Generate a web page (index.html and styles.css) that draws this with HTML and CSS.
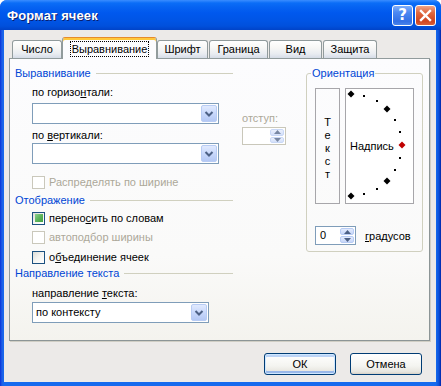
FILE: index.html
```html
<!DOCTYPE html>
<html lang="ru">
<head>
<meta charset="utf-8">
<title>Формат ячеек</title>
<link rel="stylesheet" href="styles.css">
</head>
<body>
<div class="window">
  <div class="titlebar">
    <span class="title">Формат ячеек</span>
    <div class="caption-buttons">
      <span class="cap-btn help">?</span>
      <span class="cap-btn close"><svg width="13" height="13" viewBox="0 0 13 13"><path d="M2 2 L11 11 M11 2 L2 11" stroke="#fff" stroke-width="2.4" stroke-linecap="square"/></svg></span>
    </div>
  </div>
  <div class="client">
    <div class="tabs">
      <span class="tab t-num">Число</span>
      <span class="tab active t-align"><span class="focus">Выравнивание</span></span>
      <span class="tab t-font">Шрифт</span>
      <span class="tab t-border">Граница</span>
      <span class="tab t-view">Вид</span>
      <span class="tab t-prot">Защита</span>
    </div>
    <div class="panel">
      <div class="left">
        <div class="group-head"><span>Выравнивание</span><i class="rule"></i></div>
        <div class="align-body">
          <div class="combos">
            <div class="field-label fl-1">по горизо<u>н</u>тали:</div>
            <div class="combo cb-1"><span class="combo-text"></span><span class="drop"><svg width="10" height="8" viewBox="0 0 10 8"><path d="M1.5 2 L5 5.5 L8.5 2" fill="none" stroke="#4D6185" stroke-width="2"/></svg></span></div>
            <div class="field-label fl-2">по <u>в</u>ертикали:</div>
            <div class="combo cb-2"><span class="combo-text"></span><span class="drop"><svg width="10" height="8" viewBox="0 0 10 8"><path d="M1.5 2 L5 5.5 L8.5 2" fill="none" stroke="#4D6185" stroke-width="2"/></svg></span></div>
          </div>
          <div class="indent">
            <div class="field-label disabled">отступ:</div>
            <div class="spin spin-indent">
              <span class="spin-text"></span>
              <span class="spin-btns">
                <span class="sb up"><svg width="7" height="4" viewBox="0 0 7 4"><path d="M0 4 L3.5 0 L7 4Z" fill="#4D6185"/></svg></span>
                <span class="sb down"><svg width="7" height="4" viewBox="0 0 7 4"><path d="M0 0 L3.5 4 L7 0Z" fill="#4D6185"/></svg></span>
              </span>
            </div>
          </div>
        </div>
        <div class="check-row disabled cr-1"><span class="cb"></span><span class="cl">Распределять по ширине</span></div>
        <div class="group-head gh-2"><span>Отображение</span><i class="rule"></i></div>
        <div class="check-row cr-2"><span class="cb on mixed"></span><span class="cl">перено<u>с</u>ить по словам</span></div>
        <div class="check-row disabled cr-3"><span class="cb"></span><span class="cl">автоподбор ширины</span></div>
        <div class="check-row cr-4"><span class="cb on"></span><span class="cl">о<u>б</u>ъединение ячеек</span></div>
        <div class="group-head gh-3"><span>Направление текста</span><i class="rule"></i></div>
        <div class="field-label fl-3">направление <u>т</u>екста:</div>
        <div class="combo cb-3"><span class="combo-text">по контексту</span><span class="drop"><svg width="10" height="8" viewBox="0 0 10 8"><path d="M1.5 2 L5 5.5 L8.5 2" fill="none" stroke="#4D6185" stroke-width="2"/></svg></span></div>
      </div>
      <fieldset class="orient">
        <legend>Ориентация</legend>
        <div class="orient-row">
          <div class="vtext"><span>Т</span><span>е</span><span>к</span><span>с</span><span>т</span></div>
          <div class="dial">
            <svg width="67" height="114" viewBox="0 0 67 114">
              <text x="4" y="61" class="dial-text">Надпись</text>
              <g fill="#000">
                <path d="M5 1.5 L8.5 5 L5 8.5 L1.5 5Z"/>
                <rect x="17" y="6" width="2" height="2"/>
                <rect x="30" y="11" width="2" height="2"/>
                <path d="M41 16.5 L44.5 20 L41 23.5 L37.5 20Z"/>
                <rect x="48" y="30" width="2" height="2"/>
                <rect x="53" y="42" width="2" height="2"/>
                <rect x="53" y="68" width="2" height="2"/>
                <rect x="48" y="80" width="2" height="2"/>
                <path d="M41 88.5 L44.5 92 L41 95.5 L37.5 92Z"/>
                <rect x="30" y="99" width="2" height="2"/>
                <rect x="17" y="104" width="2" height="2"/>
                <path d="M5 103.5 L8.5 107 L5 110.5 L1.5 107Z"/>
              </g>
              <path d="M56 52.5 L59.5 56 L56 59.5 L52.5 56Z" fill="#C00000"/>
            </svg>
          </div>
        </div>
        <div class="deg-row">
          <div class="spin spin-deg">
            <span class="spin-text">0</span>
            <span class="spin-btns">
              <span class="sb up"><svg width="7" height="4" viewBox="0 0 7 4"><path d="M0 4 L3.5 0 L7 4Z" fill="#4D6185"/></svg></span>
              <span class="sb down"><svg width="7" height="4" viewBox="0 0 7 4"><path d="M0 0 L3.5 4 L7 0Z" fill="#4D6185"/></svg></span>
            </span>
          </div>
          <span class="deg-label"><u>г</u>радусов</span>
        </div>
      </fieldset>
    </div>
    <div class="buttons">
      <span class="btn default">ОК</span>
      <span class="btn">Отмена</span>
    </div>
  </div>
</div>
</body>
</html>
```
FILE: styles.css
```css
* { box-sizing: border-box; }
html, body { margin: 0; padding: 0; }
body {
  width: 441px;
  height: 386px;
  overflow: hidden;
  background: #ffffff;
  font-family: "Liberation Sans", Arial, sans-serif;
  font-size: 11px;
  color: #000;
}
u { text-decoration: underline; text-underline-offset: 1px; }

.window {
  width: 441px;
  height: 386px;
  display: flex;
  flex-direction: column;
  background: linear-gradient(to right, #0831D9 0, #1E5FE6 2px, #166AEE 4px, #166AEE 436px, #0B4FD8 439px, #0024A8 441px);
  border-radius: 7px 7px 0 0;
  overflow: hidden;
}

.titlebar {
  height: 30px;
  flex: none;
  display: flex;
  align-items: center;
  justify-content: space-between;
  padding: 0 5px 0 7px;
  background: linear-gradient(to bottom, #3A8DFF 0, #0B6DF7 3px, #0663F2 7px, #0058EE 13px, #0055E6 20px, #0050DC 26px, #0043C8 30px);
}
.title {
  color: #fff;
  font-family: "Liberation Sans", Arial, sans-serif;
  font-weight: bold;
  font-size: 13px;
  text-shadow: 1px 1px 0 #0A1E6E;
  letter-spacing: 0.1px;
}
.caption-buttons { display: flex; gap: 2px; }
.cap-btn {
  width: 21px;
  height: 21px;
  border: 1px solid #fff;
  border-radius: 3px;
  display: flex;
  align-items: center;
  justify-content: center;
  color: #fff;
  font-weight: bold;
  font-size: 15px;
}
.help {
  background: linear-gradient(to bottom, #7FAEFA 0, #4C88F2 35%, #3370E6 80%, #4A84EA 100%);
  font-family: "DejaVu Sans", sans-serif;
}
.close {
  background: linear-gradient(to bottom, #F0A488 0, #E06840 35%, #CF4520 80%, #D9603A 100%);
}

.client {
  flex: 1;
  margin: 0 5px 4px 4px;
  background: #ECEAE8;
  padding: 7px 0 0 5px;
  display: flex;
  flex-direction: column;
}

.tabs {
  display: flex;
  align-items: flex-end;
  height: 21px;
  padding-left: 3px;
  position: relative;
  z-index: 1;
}
.tab {
  height: 18px;
  line-height: 17px;
  text-align: center;
  border: 1px solid #919B9C;
  border-bottom: none;
  border-radius: 3px 3px 0 0;
  background: linear-gradient(to bottom, #FFFFFF 0, #F7F7F5 40%, #E9ECF1 75%, #D5DCE7 100%);
  margin-right: 1px;
  white-space: nowrap;
}
.t-num { width: 50px; margin-right: 0; }
.t-align { width: 95px; }
.t-font { width: 51px; }
.t-border { width: 59px; }
.t-view { width: 53px; }
.t-prot { width: 54px; }
.tab.active {
  height: 22px;
  margin-right: 0;
  margin-bottom: -1px;
  border-top: 1px solid #E68B2C;
  background: #FCFCFE;
  box-shadow: inset 0 2px 0 #FFC83C;
  padding-top: 3px;
  line-height: 14px;
}
.focus {
  display: inline-block;
  border: 1px dotted #000;
  padding: 0 1px;
  line-height: 14px;
}

.panel {
  width: 421px;
  height: 283px;
  border: 1px solid #919B9C;
  border-right-color: #8C9596;
  border-bottom-color: #8C9596;
  box-shadow: 1px 1px 0 #D0CEC4;
  background: linear-gradient(to bottom, #FCFCFE 0, #FAFAF9 70%, #F4F3EE 100%);
  padding: 7px 0 0 5px;
  display: flex;
  align-items: flex-start;
}

.left { width: 218px; flex: none; display: flex; flex-direction: column; }
.group-head {
  height: 14px;
  line-height: 14px;
  display: flex;
  align-items: center;
  color: #0046D5;
  gap: 5px;
}
.rule { flex: 1; height: 1px; background: #D0D0BF; }
.gh-2 { margin-top: 4px; }
.gh-3 { margin-top: 2px; }

.field-label { height: 14px; line-height: 14px; white-space: nowrap; }
.disabled { color: #ACA899; }

.align-body { display: flex; padding-left: 17px; }
.combos { width: 187px; flex: none; display: flex; flex-direction: column; }
.fl-1 { margin-top: 5px; }
.cb-1 { margin-top: 4px; }
.fl-2 { margin-top: 4px; }
.cb-2 { margin-top: 1px; }
.fl-3 { margin-top: 6px; margin-left: 17px; }
.cb-3 { margin-top: 2px; margin-left: 17px; width: 177px; }

.combo {
  height: 21px;
  border: 1px solid #7F9DB9;
  background: #fff;
  display: flex;
  align-items: stretch;
  padding: 1px;
}
.combo-text { flex: 1; padding-left: 2px; line-height: 17px; }
.drop {
  width: 16px;
  border: 1px solid #B8CCF4;
  border-radius: 2px;
  background: linear-gradient(to bottom, #E1EAFE 0, #C8D8FB 50%, #B4C8F4 100%);
  display: flex;
  align-items: center;
  justify-content: center;
}

.indent { margin-left: 23px; width: 45px; flex: none; display: flex; flex-direction: column; }
.indent .field-label { margin-top: 31px; }
.spin {
  border: 1px solid #7F9DB9;
  background: #fff;
  display: flex;
  padding: 1px;
}
.spin-indent { margin-top: 2px; height: 18px; width: 44px; border-color: #C9C7BA; }
.spin-text { flex: 1; padding-left: 3px; line-height: 15px; }
.spin-btns { width: 14px; display: flex; flex-direction: column; gap: 1px; }
.sb {
  flex: 1;
  border: 1px solid #B8CCF4;
  border-radius: 2px;
  background: linear-gradient(to bottom, #E3EBFD 0, #C6D6F8 100%);
  display: flex;
  align-items: center;
  justify-content: center;
}
.spin-indent .sb { opacity: 0.75; }

.check-row {
  height: 14px;
  display: flex;
  align-items: center;
  padding-left: 17px;
  gap: 4px;
  white-space: nowrap;
}
.cl { line-height: 14px; }
.cr-1 { margin-top: 11px; }
.cr-2 { margin-top: 4px; }
.cr-3 { margin-top: 5px; }
.cr-4 { margin-top: 6px; }
.cb {
  width: 13px;
  height: 13px;
  flex: none;
  border: 1px solid #CAC8BB;
  background: #fff;
  display: flex;
  align-items: center;
  justify-content: center;
}
.cb.on {
  border-color: #1C5180;
  background: linear-gradient(135deg, #DCDCD7 0, #F4F4F1 50%, #FFFFFF 100%);
}
.cb.mixed::after {
  content: "";
  width: 8px;
  height: 8px;
  background: linear-gradient(135deg, #8FD18F 0, #5DB45D 50%, #40A040 100%);
}

.orient {
  margin: 0 0 0 73px;
  padding: 0 0 6px 0;
  width: 117px;
  min-width: 0;
  border: 1px solid #D0D0BF;
  border-radius: 3px;
}
.orient legend {
  margin-left: 4px;
  padding: 0 1px;
  line-height: 14px;
  color: #0046D5;
}
.orient-row { display: flex; gap: 5px; margin: 8px 0 0 8px; }
.vtext {
  width: 25px;
  height: 116px;
  border: 1px solid #A7A6AA;
  display: flex;
  flex-direction: column;
  align-items: center;
  justify-content: center;
  padding-top: 4px;
  line-height: 13px;
}
.dial {
  width: 69px;
  height: 116px;
  border: 1px solid #A7A6AA;
  background: #fff;
}
.dial svg { display: block; }
.dial-text { font-family: "Liberation Sans", Arial, sans-serif; font-size: 11px; fill: #000; }

.deg-row { display: flex; align-items: center; margin: 22px 0 0 8px; }
.spin-deg { width: 41px; height: 19px; }
.deg-label { margin-left: 9px; }

.buttons {
  display: flex;
  justify-content: flex-end;
  gap: 14px;
  padding: 12px 14px 0 0;
}
.btn {
  width: 72px;
  height: 22px;
  border: 1px solid #003C74;
  border-radius: 3px;
  background: linear-gradient(to bottom, #FFFFFF 0, #F4F4F0 60%, #E6E5DE 90%, #D6D0C5 100%);
  display: flex;
  align-items: center;
  justify-content: center;
}
.btn.default {
  box-shadow: inset 0 0 0 1px #CEE7FF, inset 0 -2px 0 1px #98B8EA, inset 0 2px 0 1px #BCD4F6;
}
```
